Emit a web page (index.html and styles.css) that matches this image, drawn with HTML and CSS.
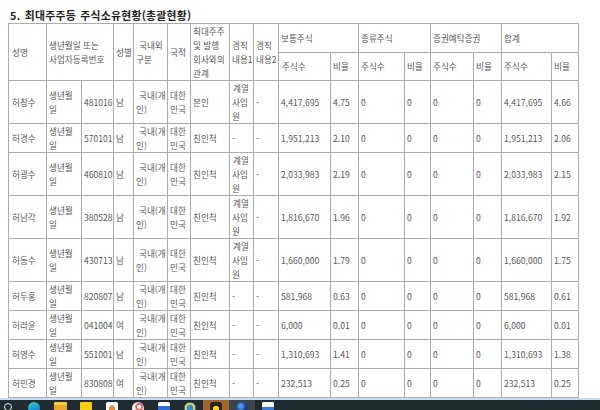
FILE: index.html
```html
<!DOCTYPE html>
<html lang="ko">
<head>
<meta charset="utf-8">
<title>최대주주등 주식소유현황</title>
<link rel="stylesheet" href="styles.css">
</head>
<body>
<div class="screen">
  <div class="page">
    <h3 class="title">5. 최대주주등 주식소유현황(총괄현황)</h3>
    <table class="holdings">
      <colgroup>
        <col class="c38"><col class="c35"><col class="c32"><col class="c20"><col class="c34"><col class="c23"><col class="c39"><col class="c24"><col class="c25">
        <col class="c52"><col class="c28"><col class="c46"><col class="c26"><col class="c43"><col class="c28"><col class="c50"><col class="c27">
      </colgroup>
      <thead>
        <tr class="h1">
          <th rowspan="2">성명</th>
          <th rowspan="2" colspan="2">생년월일 또는<br>사업자등록번호</th>
          <th rowspan="2">성별</th>
          <th rowspan="2" class="ind">국내외<br>구분</th>
          <th rowspan="2">국적</th>
          <th rowspan="2">최대주주<br>및 발행<br>회사와의<br>관계</th>
          <th rowspan="2">겸직<br>내용1</th>
          <th rowspan="2">겸직<br>내용2</th>
          <th colspan="2">보통주식</th>
          <th colspan="2">종류주식</th>
          <th colspan="2">증권예탁증권</th>
          <th colspan="2">합계</th>
        </tr>
        <tr class="h2">
          <th>주식수</th><th>비율</th>
          <th>주식수</th><th>비율</th>
          <th>주식수</th><th>비율</th>
          <th>주식수</th><th>비율</th>
        </tr>
      </thead>
      <tbody>
        <tr><td class="nm">허창수</td><td>생년월<br>일</td><td>481016</td><td>남</td><td class="ind">국내(개<br>인)</td><td>대한<br>민국</td><td>본인</td><td class="ind1">계열<br>사임<br>원</td><td>-</td><td>4,417,695</td><td>4.75</td><td>0</td><td>0</td><td>0</td><td>0</td><td>4,417,695</td><td>4.66</td></tr>
        <tr><td class="nm">허경수</td><td>생년월<br>일</td><td>570101</td><td>남</td><td class="ind">국내(개<br>인)</td><td>대한<br>민국</td><td>친인척</td><td>-</td><td>-</td><td>1,951,213</td><td>2.10</td><td>0</td><td>0</td><td>0</td><td>0</td><td>1,951,213</td><td>2.06</td></tr>
        <tr><td class="nm">허광수</td><td>생년월<br>일</td><td>460810</td><td>남</td><td class="ind">국내(개<br>인)</td><td>대한<br>민국</td><td>친인척</td><td class="ind1">계열<br>사임<br>원</td><td>-</td><td>2,033,983</td><td>2.19</td><td>0</td><td>0</td><td>0</td><td>0</td><td>2,033,983</td><td>2.15</td></tr>
        <tr><td class="nm">허남각</td><td>생년월<br>일</td><td>380528</td><td>남</td><td class="ind">국내(개<br>인)</td><td>대한<br>민국</td><td>친인척</td><td class="ind1">계열<br>사임<br>원</td><td>-</td><td>1,816,670</td><td>1.96</td><td>0</td><td>0</td><td>0</td><td>0</td><td>1,816,670</td><td>1.92</td></tr>
        <tr><td class="nm">허동수</td><td>생년월<br>일</td><td>430713</td><td>남</td><td class="ind">국내(개<br>인)</td><td>대한<br>민국</td><td>친인척</td><td class="ind1">계열<br>사임<br>원</td><td>-</td><td>1,660,000</td><td>1.79</td><td>0</td><td>0</td><td>0</td><td>0</td><td>1,660,000</td><td>1.75</td></tr>
        <tr><td class="nm">허두홍</td><td>생년월<br>일</td><td>820807</td><td>남</td><td class="ind">국내(개<br>인)</td><td>대한<br>민국</td><td>친인척</td><td>-</td><td>-</td><td>581,968</td><td>0.63</td><td>0</td><td>0</td><td>0</td><td>0</td><td>581,968</td><td>0.61</td></tr>
        <tr><td class="nm">허라윤</td><td>생년월<br>일</td><td>041004</td><td>여</td><td class="ind">국내(개<br>인)</td><td>대한<br>민국</td><td>친인척</td><td>-</td><td>-</td><td>6,000</td><td>0.01</td><td>0</td><td>0</td><td>0</td><td>0</td><td>6,000</td><td>0.01</td></tr>
        <tr><td class="nm">허명수</td><td>생년월<br>일</td><td>551001</td><td>남</td><td class="ind">국내(개<br>인)</td><td>대한<br>민국</td><td>친인척</td><td>-</td><td>-</td><td>1,310,693</td><td>1.41</td><td>0</td><td>0</td><td>0</td><td>0</td><td>1,310,693</td><td>1.38</td></tr>
        <tr><td class="nm">허민경</td><td>생년월<br>일</td><td>830808</td><td>여</td><td class="ind">국내(개<br>인)</td><td>대한<br>민국</td><td>친인척</td><td>-</td><td>-</td><td>232,513</td><td>0.25</td><td>0</td><td>0</td><td>0</td><td>0</td><td>232,513</td><td>0.25</td></tr>
      </tbody>
    </table>
  </div>
  <div class="taskbar">
    <div class="tb-item first"><span class="ic search"></span></div>
    <div class="tb-item"><span class="ic edge"></span></div>
    <div class="tb-item"><span class="ic folder"></span></div>
    <div class="tb-item"><span class="ic sticky"></span></div>
    <div class="tb-item"><span class="ic paint"></span></div>
    <div class="tb-item"><span class="ic redapp"></span></div>
    <div class="tb-item"><span class="ic store"></span></div>
    <div class="tb-item"><span class="ic ie"></span></div>
    <div class="tb-item active"><span class="ic kakao"></span></div>
    <div class="tb-item open"><span class="ic globe"></span></div>
    <div class="tb-item"><span class="ic doc"></span></div>
  </div>
</div>
</body>
</html>
```

FILE: styles.css
```css
* { box-sizing: border-box; }
html, body { margin: 0; padding: 0; }
body {
  width: 600px;
  height: 410px;
  overflow: hidden;
  background: #fff;
  font-family: "Noto Sans CJK KR", "Noto Sans", sans-serif;
}
.screen {
  display: flex;
  flex-direction: column;
  height: 410px;
}
.page {
  flex: 1;
  min-height: 0;
  overflow: hidden;
  padding: 8px 0 0 8px;
}
.title {
  margin: 0 0 1px 2px;
  font-size: 10.8px;
  line-height: 14px;
  letter-spacing: 0.3px;
  word-spacing: 1px;
  font-weight: bold;
  color: #222;
}
.holdings {
  border-collapse: collapse;
  table-layout: fixed;
  width: 570px;
  font-size: 8.6px;
  line-height: 14px;
  color: #585858;
}
.holdings th,
.holdings td {
  border: 1px solid #ababab;
  padding: 0 2px;
  text-align: left;
  vertical-align: middle;
  font-weight: normal;
  white-space: nowrap;
  overflow: hidden;
}
.holdings .h1 { height: 28px; }
.holdings .h2 { height: 28px; }
.holdings .nm { padding-left: 3px; }
.holdings th:first-child { padding-left: 3px; }
.holdings .ind { text-indent: 3px; }
.holdings .ind1 { text-indent: 1px; }

.c38 { width: 38px; }
.c35 { width: 35px; }
.c32 { width: 32px; }
.c20 { width: 20px; }
.c34 { width: 34px; }
.c23 { width: 23px; }
.c39 { width: 39px; }
.c24 { width: 24px; }
.c25 { width: 25px; }
.c52 { width: 52px; }
.c28 { width: 28px; }
.c46 { width: 46px; }
.c26 { width: 26px; }
.c43 { width: 43px; }
.c50 { width: 50px; }
.c27 { width: 27px; }

.taskbar {
  flex: none;
  height: 12px;
  border-top: 2px solid #cadcef;
  background: #1f2b30;
  display: flex;
  overflow: hidden;
}
.tb-item {
  width: 26px;
  height: 10px;
  display: flex;
  justify-content: center;
  padding-top: 2px;
}
.tb-item.first { margin-left: -5px; }
.tb-item.active { background: #a3662e; }
.tb-item.open { background: #39454a; }
.ic {
  display: block;
  width: 12px;
  height: 12px;
}
.ic.search {
  width: 8px;
  height: 8px;
  margin-top: 1px;
  border: 1.5px solid #e8eef0;
  border-radius: 50%;
}
.ic.edge {
  border-radius: 50%;
  background: linear-gradient(160deg, #3fd0a0 0%, #1f9fd8 50%, #1860c0 100%);
}
.ic.folder {
  border-radius: 1px;
  background: linear-gradient(#f7c948 0 3px, #e8a92a 3px);
  width: 13px;
}
.ic.sticky {
  background: #f6cf12;
  border-radius: 1px;
}
.ic.paint {
  border-radius: 2px;
  background: radial-gradient(circle at 50% 55%, #f08a3a 0 3px, #ffffff 3.5px);
}
.ic.redapp {
  border-radius: 50%;
  background: radial-gradient(circle at 60% 40%, #ffffff 0 2px, #e03a3a 2.5px, #f4f4f4 5px);
}
.ic.store {
  border-radius: 2px;
  background: linear-gradient(#ffffff 0 4px, #2f6fd8 4px);
}
.ic.ie {
  border-radius: 50%;
  background: radial-gradient(circle, #2a8fe0 0 3px, #f2c53a 3.5px 5px, #1e7ad6 5.5px);
}
.ic.kakao {
  border-radius: 3px;
  background: radial-gradient(circle at 50% 60%, #f9d61a 0 3px, #2a2420 3.5px);
}
.ic.globe {
  border-radius: 50%;
  background: radial-gradient(circle at 40% 35%, #4f8fe0 0 2px, #1d3c8a 5px);
}
.ic.doc {
  border-radius: 1px;
  background: linear-gradient(#f4f8fc 0 5px, #3b7bd4 5px);
}
```
